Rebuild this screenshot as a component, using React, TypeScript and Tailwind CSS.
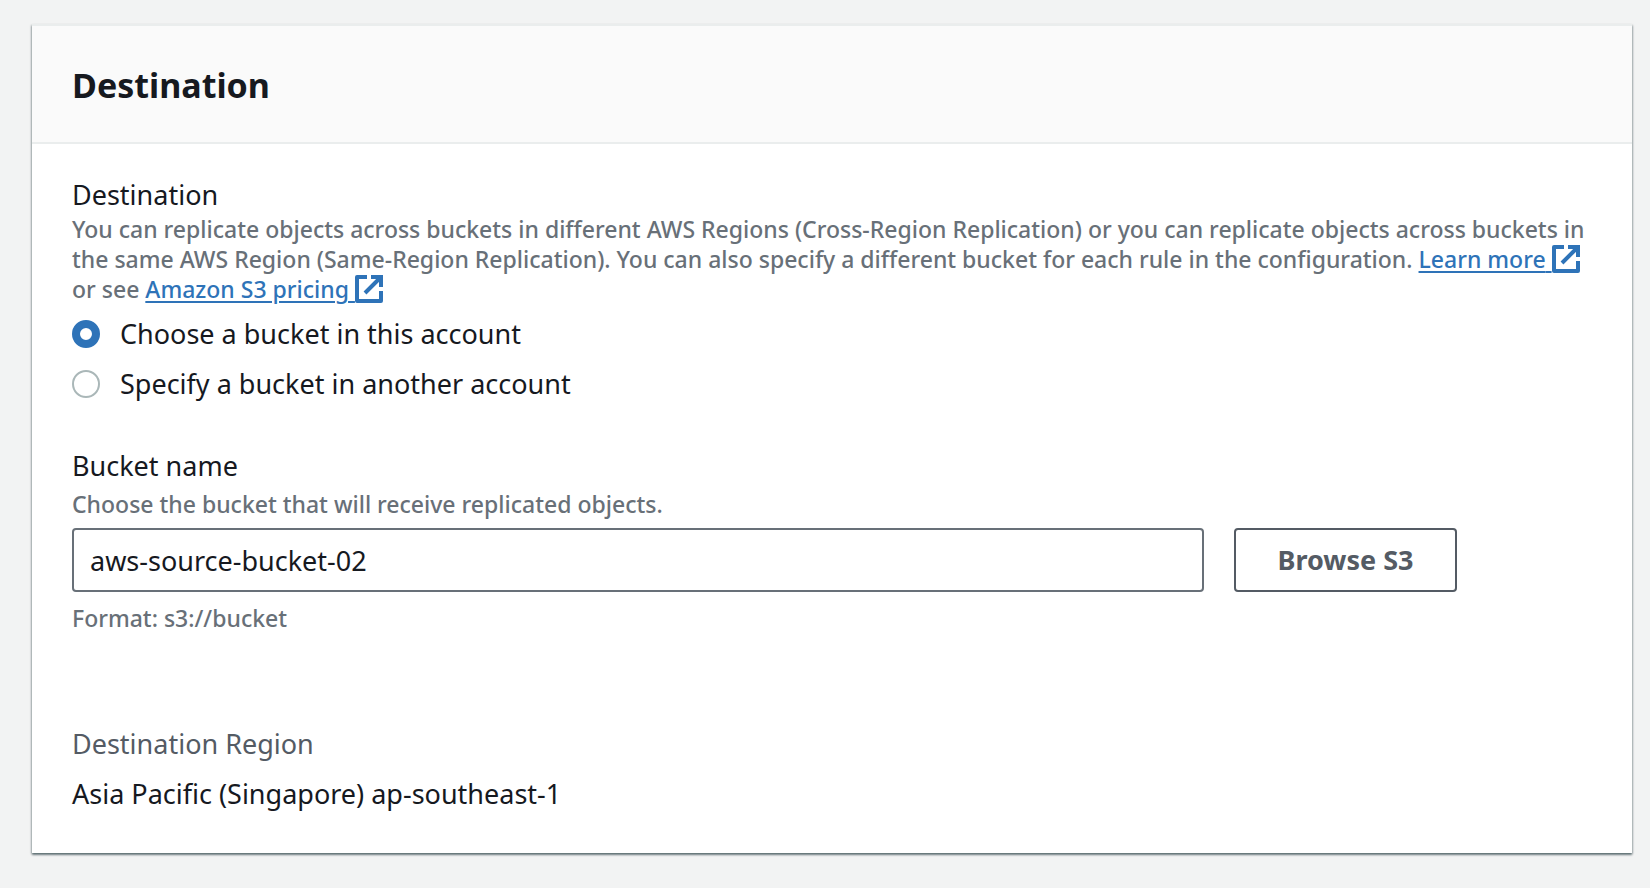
import { useState } from "react";
import type { ReactNode } from "react";

function ExternalIcon() {
  return (
    <svg
      viewBox="0 0 28 28"
      aria-hidden="true"
      className="inline-block size-7 align-[-5px]"
      fill="none"
      stroke="currentColor"
      strokeWidth="4"
    >
      <path d="M12 2H2v24h24V16" strokeLinejoin="round" />
      <path d="M16 2h10v10M25 3 10 18" />
    </svg>
  );
}

function ExternalLink({ href, children }: { href: string; children: ReactNode }) {
  return (
    <a href={href} className="whitespace-nowrap text-[#2e73b8]">
      <span className="whitespace-pre underline decoration-2 underline-offset-3">{children} </span>
      <ExternalIcon />
    </a>
  );
}

function RadioOption({
  value,
  checked,
  onSelect,
  children,
}: {
  value: string;
  checked: boolean;
  onSelect: (value: string) => void;
  children: ReactNode;
}) {
  return (
    <label className="flex items-center gap-5">
      <input
        type="radio"
        name="destination"
        value={value}
        checked={checked}
        onChange={() => onSelect(value)}
        className="size-7 shrink-0 appearance-none rounded-full border-2 border-[#aab7b8] bg-white checked:border-8 checked:border-[#2e73b8]"
      />
      <span>{children}</span>
    </label>
  );
}

export default function App() {
  const [target, setTarget] = useState("this-account");
  const [bucket, setBucket] = useState("aws-source-bucket-02");

  return (
    <main className="min-h-screen bg-[#f2f3f3] px-8 pt-6 pb-8 pr-[18px] font-['Noto_Sans',sans-serif] text-[27px] leading-[40px] text-[#16191f]">
      <section className="border-t-2 border-[#eaeded] bg-white shadow-[0_2px_2px_0_rgba(0,28,36,0.45),1px_1px_2px_0_rgba(0,28,36,0.2),-1px_1px_2px_0_rgba(0,28,36,0.2)]">
        <header className="border-b-2 border-[#eaeded] bg-[#fafafa] px-10 pt-[35px] pb-[33px]">
          <h2 className="text-[34px] leading-[48px] font-bold">Destination</h2>
        </header>

        <div className="px-10 pt-8 pb-[39px]">
          <fieldset>
            <legend className="leading-[38px]">Destination</legend>
            <p className="text-[23px] leading-[30px] font-medium text-[#687078]">
              You can replicate objects across buckets in different AWS Regions (Cross-Region Replication) or you can replicate objects across buckets in
              <br />
              the same AWS Region (Same-Region Replication). You can also specify a different bucket for each rule in the configuration.{" "}
              <ExternalLink href="#learn-more">Learn more</ExternalLink>
              <br />
              or see <ExternalLink href="#pricing">Amazon S3 pricing</ExternalLink>
            </p>
            <div className="mt-[10px] flex flex-col gap-[10px]">
              <RadioOption value="this-account" checked={target === "this-account"} onSelect={setTarget}>
                Choose a bucket in this account
              </RadioOption>
              <RadioOption value="other-account" checked={target === "other-account"} onSelect={setTarget}>
                Specify a bucket in another account
              </RadioOption>
            </div>
          </fieldset>

          <div className="mt-[42px]">
            <label htmlFor="bucket" className="block">
              Bucket name
            </label>
            <p className="text-[23px] leading-[36px] font-medium text-[#687078]">Choose the bucket that will receive replicated objects.</p>
            <div className="mt-[6px] mr-[135px] flex gap-[30px]">
              <input
                id="bucket"
                type="text"
                value={bucket}
                onChange={(event) => setBucket(event.target.value)}
                className="h-16 min-w-0 flex-1 rounded-[4px] border-2 border-[#687078] bg-white px-4"
              />
              <button
                type="button"
                className="h-16 w-[223px] rounded-[4px] border-2 border-[#545b64] bg-white font-bold text-[#545b64]"
              >
                Browse S3
              </button>
            </div>
            <p className="mt-2 text-[23px] leading-[36px] font-medium text-[#687078]">Format: s3://bucket</p>
          </div>

          <dl className="mt-[88px]">
            <dt className="text-[#545b64]">Destination Region</dt>
            <dd className="mt-[10px]">Asia Pacific (Singapore) ap-southeast-1</dd>
          </dl>
        </div>
      </section>
    </main>
  );
}
